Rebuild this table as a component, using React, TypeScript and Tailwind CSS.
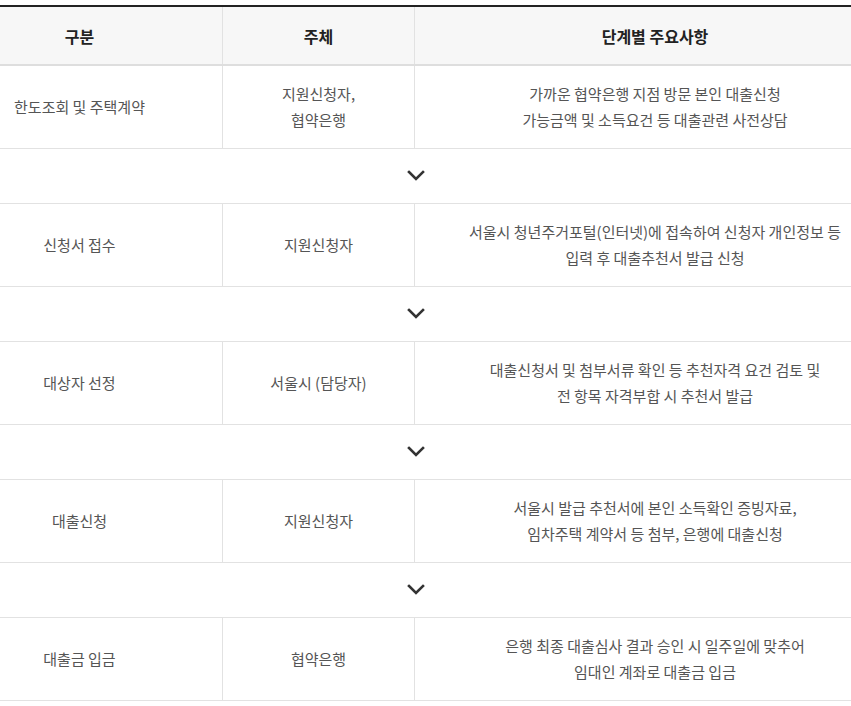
import React from 'react';

interface Step {
  name: string;
  actor: string[];
  detail: string[];
}

const steps: Step[] = [
  {
    name: '한도조회 및 주택계약',
    actor: ['지원신청자,', '협약은행'],
    detail: ['가까운 협약은행 지점 방문 본인 대출신청', '가능금액 및 소득요건 등 대출관련 사전상담'],
  },
  {
    name: '신청서 접수',
    actor: ['지원신청자'],
    detail: ['서울시 청년주거포털(인터넷)에 접속하여 신청자 개인정보 등', '입력 후 대출추천서 발급 신청'],
  },
  {
    name: '대상자 선정',
    actor: ['서울시 (담당자)'],
    detail: ['대출신청서 및 첨부서류 확인 등 추천자격 요건 검토 및', '전 항목 자격부합 시 추천서 발급'],
  },
  {
    name: '대출신청',
    actor: ['지원신청자'],
    detail: ['서울시 발급 추천서에 본인 소득확인 증빙자료,', '임차주택 계약서 등 첨부, 은행에 대출신청'],
  },
  {
    name: '대출금 입금',
    actor: ['협약은행'],
    detail: ['은행 최종 대출심사 결과 승인 시 일주일에 맞추어', '임대인 계좌로 대출금 입금'],
  },
];

const Chevron: React.FC = () => (
  <svg width="18" height="12" viewBox="0 0 18 12" fill="none">
    <polyline points="2,2 9,9 16,2" stroke="#333" strokeWidth="2.6" strokeLinecap="square" />
  </svg>
);

const Lines: React.FC<{ lines: string[] }> = ({ lines }) => (
  <>
    {lines.map((l, i) => (
      <div key={i}>{l}</div>
    ))}
  </>
);

export default function App() {
  return (
    <div
      className="w-[851px] h-[706px] overflow-hidden bg-white pt-[5px]"
      style={{ fontFamily: '"Noto Sans CJK KR", "Noto Sans", sans-serif' }}
    >
      <div className="-ml-[63px] w-[958px] border-t-2 border-[#222]">
        {/* header */}
        <div className="flex h-[59px] bg-[#f7f7f7] border-b-2 border-[#dedede] text-[16px] font-bold text-[#222]">
          <div className="w-[286px] flex items-center justify-center border-r border-[#e2e2e2]">구분</div>
          <div className="w-[192px] flex items-center justify-center border-r border-[#e2e2e2]">주체</div>
          <div className="w-[480px] flex items-center justify-center">단계별 주요사항</div>
        </div>

        {steps.map((s, i) => (
          <React.Fragment key={i}>
            {i > 0 && (
              <div className="h-[55px] flex items-center justify-center border-b border-[#e2e2e2]">
                <Chevron />
              </div>
            )}
            <div className="flex h-[83px] border-b border-[#e2e2e2] text-[15px] leading-[26px] text-[#555] text-center">
              <div className="w-[286px] flex flex-col items-center justify-center border-r border-[#e2e2e2]">
                <Lines lines={[s.name]} />
              </div>
              <div className="w-[192px] flex flex-col items-center justify-center border-r border-[#e2e2e2]">
                <Lines lines={s.actor} />
              </div>
              <div className="w-[480px] flex flex-col items-center justify-center">
                <Lines lines={s.detail} />
              </div>
            </div>
          </React.Fragment>
        ))}
      </div>
    </div>
  );
}
